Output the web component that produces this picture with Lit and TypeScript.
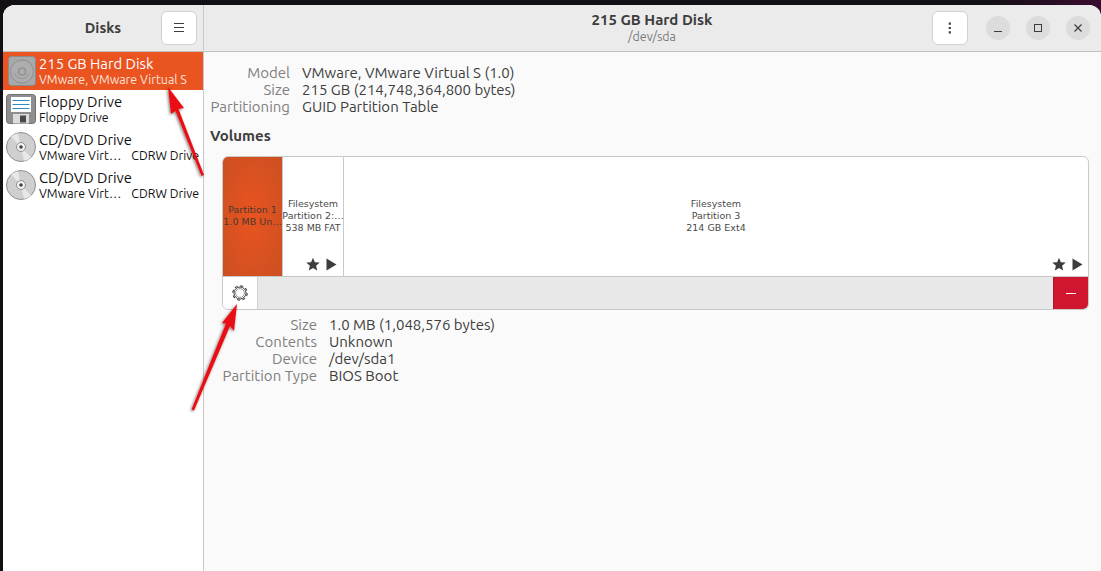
import { LitElement, html, css, svg } from "lit";
import { customElement } from "lit/decorators.js";

const hddIcon = html`<svg class="dicon" viewBox="0 0 28 30" width="28" height="30">
  <rect x="0.5" y="0.5" width="27" height="29" rx="3" fill="#a8a8a8" stroke="#8a8a8a"/>
  <circle cx="14" cy="15.500" r="11.500" fill="#adadad" stroke="#8f8f8f"/>
  <path d="M6.500 17a7.500 7.500 0 0 0 14.500 0" fill="none" stroke="#959595"/>
  <circle cx="14" cy="15.500" r="3.500" fill="none" stroke="#8a8a8a" stroke-width="1.200"/>
</svg>`;

const floppyIcon = html`<svg class="dicon" viewBox="0 0 30 30" width="30" height="30">
  <rect x="0.5" y="0.5" width="29" height="29" rx="3" fill="#8f8f8f" stroke="#6f6f6f"/>
  <rect x="5" y="3" width="20" height="15" fill="#fff"/>
  <path d="M6.5 6.5h17M6.5 10.5h17M6.5 14.5h17" stroke="#2a8cc4" stroke-width="1"/>
  <rect x="7" y="20" width="16" height="9.500" fill="#dcdcdc"/>
  <rect x="14" y="21.500" width="6" height="7" fill="#4a4a4a"/>
</svg>`;

const cdIcon = html`<svg class="dicon" viewBox="0 0 30 30" width="30" height="30">
  <circle cx="15" cy="15" r="14.500" fill="#cfcfcf" stroke="#8f8f8f"/>
  <path d="M15 15L5 4.500A14 14 0 0 1 12 1.200zM15 15l10 10.500A14 14 0 0 1 18 28.800z" fill="#e8e8e8"/>
  <circle cx="15" cy="15" r="4.500" fill="#f2f2f2" stroke="#8f8f8f"/>
  <circle cx="15" cy="15" r="1.800" fill="#444"/>
</svg>`;

const star = svg`<path d="M7 .8l1.900 4.400 4.800.4-3.600 3.100 1.100 4.700L7 10.900l-4.200 2.500 1.100-4.700L.3 5.600l4.800-.4z" fill="#3d3d3d"/>`;
const segIcons = html`<div class="segicons">
  <svg width="14" height="14" viewBox="0 0 14 14">${star}</svg>
  <svg width="11" height="13" viewBox="0 0 11 13"><path d="M.5.5L10.500 6.500.5 12.500z" fill="#3d3d3d"/></svg>
</div>`;

const sidebarRows = [
  { icon: hddIcon, title: "215 GB Hard Disk", sub: "VMware, VMware Virtual S", extra: "", sel: true },
  { icon: floppyIcon, title: "Floppy Drive", sub: "Floppy Drive", extra: "", sel: false },
  { icon: cdIcon, title: "CD/DVD Drive", sub: "VMware Virt…", extra: "CDRW Drive", sel: false },
  { icon: cdIcon, title: "CD/DVD Drive", sub: "VMware Virt…", extra: "CDRW Drive", sel: false },
];

@customElement("app-root")
export class AppRoot extends LitElement {
  static styles = css`
    :host {
      display: block;
      position: relative;
      width: 1101px;
      height: 571px;
      overflow: hidden;
      background: linear-gradient(90deg, #131015 0, #131015 90%, #3a0c30 100%);
      font-family: "Ubuntu", "Noto Sans", "Open Sans", sans-serif;
      font-size: 15px;
      color: #3d3d3d;
    }
    .win {
      box-sizing: border-box;
      margin: 5px 0 0 3px;
      height: 566px;
      display: flex;
      border-radius: 12px 12px 0 0;
      overflow: hidden;
      background: #fafafa;
    }
    .side {
      width: 201px;
      flex: none;
      display: flex;
      flex-direction: column;
      background: #fff;
      border-right: 1px solid #c9c9c9;
      box-sizing: border-box;
    }
    .bar {
      height: 47px;
      flex: none;
      box-sizing: border-box;
      border-bottom: 1px solid #c0c0c0;
      background: #ebebeb;
      display: flex;
      align-items: center;
    }
    .side .bar { padding: 0 6px 0 0; justify-content: space-between; }
    .side-title { flex: 1; text-align: center; font-weight: 700; font-size: 14.500px; padding: 0 0 2px 42px; color: #3d3d3d; }
    .hbtn {
      width: 36px;
      height: 34px;
      box-sizing: border-box;
      border: 1px solid #d0d0d0;
      border-radius: 6px;
      background: #fff;
      display: flex;
      align-items: center;
      justify-content: center;
      flex: none;
    }
    .row {
      height: 38px;
      box-sizing: border-box;
      display: flex;
      align-items: center;
      padding: 0 4px 0 3px;
      gap: 3px;
      color: #111;
      flex: none;
    }
    .row .dicon { flex: none; }
    .row.sel { background: #e95420; color: #fff; padding-left: 5px; }
    .row.sel .t2 { color: #fbe3d8; }
    .txt { flex: 1; min-width: 0; display: flex; flex-direction: column; padding-bottom: 1px; }
    .t1 { font-size: 14.800px; line-height: 17px; white-space: nowrap; }
    .t2 { font-size: 12.400px; line-height: 14px; display: flex; justify-content: space-between; white-space: nowrap; }
    .main { flex: 1; min-width: 0; display: flex; flex-direction: column; }
    .main .bar { padding-right: 6px; }
    .title { flex: 1; padding-left: 168px; padding-bottom: 1px; text-align: center; line-height: 16px; }
    .title b { display: block; font-size: 15px; color: #3d3d3d; }
    .title span { display: block; font-size: 12.400px; color: #7a7a7a; }
    .wbtns { display: flex; gap: 16px; margin-left: 18px; margin-right: 5px; }
    .wbtn {
      width: 24px;
      height: 24px;
      border-radius: 50%;
      background: #dcdcdc;
      display: flex;
      align-items: center;
      justify-content: center;
    }
    .content { padding: 12px 12px 0 6px; display: flex; flex-direction: column; }
    .grid {
      display: grid;
      grid-auto-rows: 17px;
      column-gap: 12px;
      line-height: 17px;
      font-size: 15px;
    }
    .grid.top { grid-template-columns: 80px auto; }
    .grid.low { grid-template-columns: 95px auto; margin-left: 12px; margin-top: 6px; }
    .k { text-align: right; color: #7f7f7f; white-space: nowrap; }
    .v { color: #3d3d3d; white-space: nowrap; }
    .vol { font-weight: 700; font-size: 15px; line-height: 17px; margin-top: 12px; color: #3d3d3d; }
    .box {
      margin: 12px 0 0 12px;
      height: 154px;
      box-sizing: border-box;
      border: 1px solid #c9c9c9;
      border-radius: 6px;
      overflow: hidden;
      display: flex;
      flex-direction: column;
      background: #fff;
    }
    .segs { height: 120px; display: flex; border-bottom: 1px solid #c9c9c9; flex: none; box-sizing: border-box; }
    .seg {
      position: relative;
      box-sizing: border-box;
      border-right: 1px solid #c9c9c9;
      display: flex;
      flex-direction: column;
      align-items: center;
      justify-content: center;
      font-family: "DejaVu Sans", sans-serif;
      font-size: 9.500px;
      line-height: 12px;
      color: #4a4a4a;
      white-space: nowrap;
      overflow: hidden;
      text-align: center;
    }
    .seg.p1 {
      width: 60px;
      padding-bottom: 2px;
      background: radial-gradient(ellipse at center, #e95420 0, #cb4f22 100%);
      color: #4a3a30;
    }
    .seg.p2 { width: 61px; }
    .seg.p3 { flex: 1; border-right: none; }
    .p2 .seglab, .p3 .seglab { padding-bottom: 2px; }
    .segicons {
      position: absolute;
      right: 5px;
      bottom: 5px;
      display: flex;
      align-items: center;
      gap: 6px;
    }
    .p2 .segicons { right: 6px; }
    .tools { flex: 1; display: flex; background: #e8e8e8; justify-content: space-between; }
    .gear {
      width: 35px;
      box-sizing: border-box;
      background: #fff;
      border-right: 1px solid #d0d0d0;
      display: flex;
      align-items: center;
      justify-content: center;
    }
    .del {
      width: 35px;
      box-sizing: border-box;
      background: #d0172f;
      border-left: 1px solid #a8142a;
      display: flex;
      align-items: center;
      justify-content: center;
    }
    .del i { display: block; width: 10px; height: 1px; background: #fff; }
    .arrows { position: absolute; inset: 0; pointer-events: none; }
  `;

  render() {
    return html`
      <div class="win">
        <aside class="side">
          <div class="bar">
            <div class="side-title">Disks</div>
            <div class="hbtn">
              <svg width="12" height="10" viewBox="0 0 12 10"><path d="M1 .5h10M1 4.500h10M1 8.500h10" stroke="#3d3d3d"/></svg>
            </div>
          </div>
          ${sidebarRows.map(
            (r) => html`<div class="row ${r.sel ? "sel" : ""}">
              ${r.icon}
              <div class="txt">
                <div class="t1">${r.title}</div>
                <div class="t2"><span>${r.sub}</span>${r.extra ? html`<span>${r.extra}</span>` : ""}</div>
              </div>
            </div>`
          )}
        </aside>
        <section class="main">
          <div class="bar">
            <div class="title"><b>215 GB Hard Disk</b><span>/dev/sda</span></div>
            <div class="hbtn">
              <svg width="4" height="12" viewBox="0 0 4 12"><path d="M.7.5h2.200v2.200H.7zM.7 4.900h2.200v2.200H.7zM.7 9.300h2.200v2.200H.7z" fill="#3d3d3d"/></svg>
            </div>
            <div class="wbtns">
              <div class="wbtn"><svg width="10" height="10" viewBox="0 0 10 10"><path d="M1 8.500h8" stroke="#3d3d3d"/></svg></div>
              <div class="wbtn"><svg width="10" height="10" viewBox="0 0 10 10"><rect x="1.500" y="1.500" width="7" height="7" fill="none" stroke="#3d3d3d"/></svg></div>
              <div class="wbtn"><svg width="10" height="10" viewBox="0 0 10 10"><path d="M1.500 1.500l7 7M8.500 1.500l-7 7" stroke="#3d3d3d" stroke-width="1.200"/></svg></div>
            </div>
          </div>
          <div class="content">
            <div class="grid top">
              <div class="k">Model</div><div class="v">VMware, VMware Virtual S (1.0)</div>
              <div class="k">Size</div><div class="v">215 GB (214,748,364,800 bytes)</div>
              <div class="k">Partitioning</div><div class="v">GUID Partition Table</div>
            </div>
            <div class="vol">Volumes</div>
            <div class="box">
              <div class="segs">
                <div class="seg p1"><div>Partition 1</div><div>1.0 MB Un…</div></div>
                <div class="seg p2">
                  <div class="seglab">Filesystem<br />Partition 2:…<br />538 MB FAT</div>
                  ${segIcons}
                </div>
                <div class="seg p3">
                  <div class="seglab">Filesystem<br />Partition 3<br />214 GB Ext4</div>
                  ${segIcons}
                </div>
              </div>
              <div class="tools">
                <div class="gear">
                  <svg width="18" height="18" viewBox="0 0 18 18">
                    <circle cx="9" cy="9" r="7.200" fill="none" stroke="#4a4a4a" stroke-width="1.200" stroke-dasharray="3 2.655"/>
                    <circle cx="9" cy="9" r="6" fill="none" stroke="#3d3d3d" stroke-width="1"/>
                    <circle cx="9" cy="9" r="4.400" fill="none" stroke="#9a9a9a" stroke-width="1"/>
                  </svg>
                </div>
                <div class="del"><i></i></div>
              </div>
            </div>
            <div class="grid low">
              <div class="k">Size</div><div class="v">1.0 MB (1,048,576 bytes)</div>
              <div class="k">Contents</div><div class="v">Unknown</div>
              <div class="k">Device</div><div class="v">/dev/sda1</div>
              <div class="k">Partition Type</div><div class="v">BIOS Boot</div>
            </div>
          </div>
        </section>
      </div>
      <svg class="arrows" width="1101" height="571" viewBox="0 0 1101 571">
        <defs>
          <filter id="sh" x="-30%" y="-30%" width="160%" height="160%">
            <feDropShadow dx="-1" dy="1" stdDeviation="1.500" flood-color="#000" flood-opacity="0.550"/>
          </filter>
        </defs>
        <g filter="url(#sh)" fill="#ea0f13">
          <path d="M168 87L184 108L178.500 109L204 175L201.500 176L175.500 111L171 114z"/>
          <path d="M237 304L234 331L230 326L194 410.500L191.500 409.500L226 323.500L222 323z"/>
        </g>
      </svg>
    `;
  }
}
